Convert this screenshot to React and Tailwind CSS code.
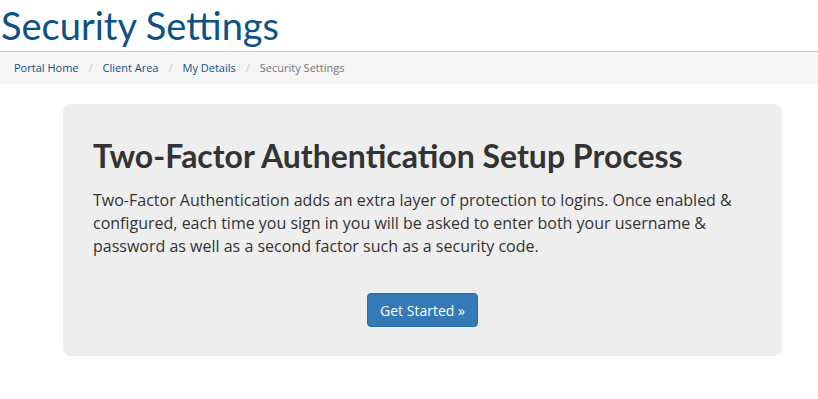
import React from "react";

export default function App() {
  return (
    <div className="w-[818px] h-[399px] bg-white overflow-hidden" style={{ fontFamily: '"Open Sans", sans-serif' }}>
      <div className="h-[52px] border-b border-[#ccc] flex items-start">
        <h1 className="text-[38px] leading-[50px] text-[#0e5185] pl-[1px]" style={{ fontFamily: 'Lato, sans-serif' }}>
          Security Settings
        </h1>
      </div>
      <div className="h-[32px] bg-[#f5f5f5] flex items-center pl-[14px] pt-[1px] text-[11px] text-[#777]">
        <span className="text-[#0e5185]">Portal Home</span>
        <span className="text-[#ccc] px-[10px]">/</span>
        <span className="text-[#0e5185]">Client Area</span>
        <span className="text-[#ccc] px-[10px]">/</span>
        <span className="text-[#0e5185]">My Details</span>
        <span className="text-[#ccc] px-[10px]">/</span>
        <span>Security Settings</span>
      </div>
      <div className="pt-[20px] pl-[63px]">
        <div className="w-[719px] h-[252px] bg-[#eeeeee] rounded-[8px] px-[30px] pt-[33px]">
          <h2 className="text-[32px] leading-[38px] font-bold text-[#333]" style={{ fontFamily: 'Lato, sans-serif' }}>
            Two-Factor Authentication Setup Process
          </h2>
          <p className="mt-[14px] text-[16px] leading-[23px] text-[#333]">
            Two-Factor Authentication adds an extra layer of protection to logins. Once enabled &amp; configured, each time you sign in you will be asked to enter both your username &amp; password as well as a second factor such as a security code.
          </p>
          <div className="flex justify-center mt-[35px]">
            <button className="h-[34px] px-[12px] bg-[#337ab7] border border-[#2e6da4] rounded-[4px] text-white text-[14px]">
              Get Started »
            </button>
          </div>
        </div>
      </div>
    </div>
  );
}
